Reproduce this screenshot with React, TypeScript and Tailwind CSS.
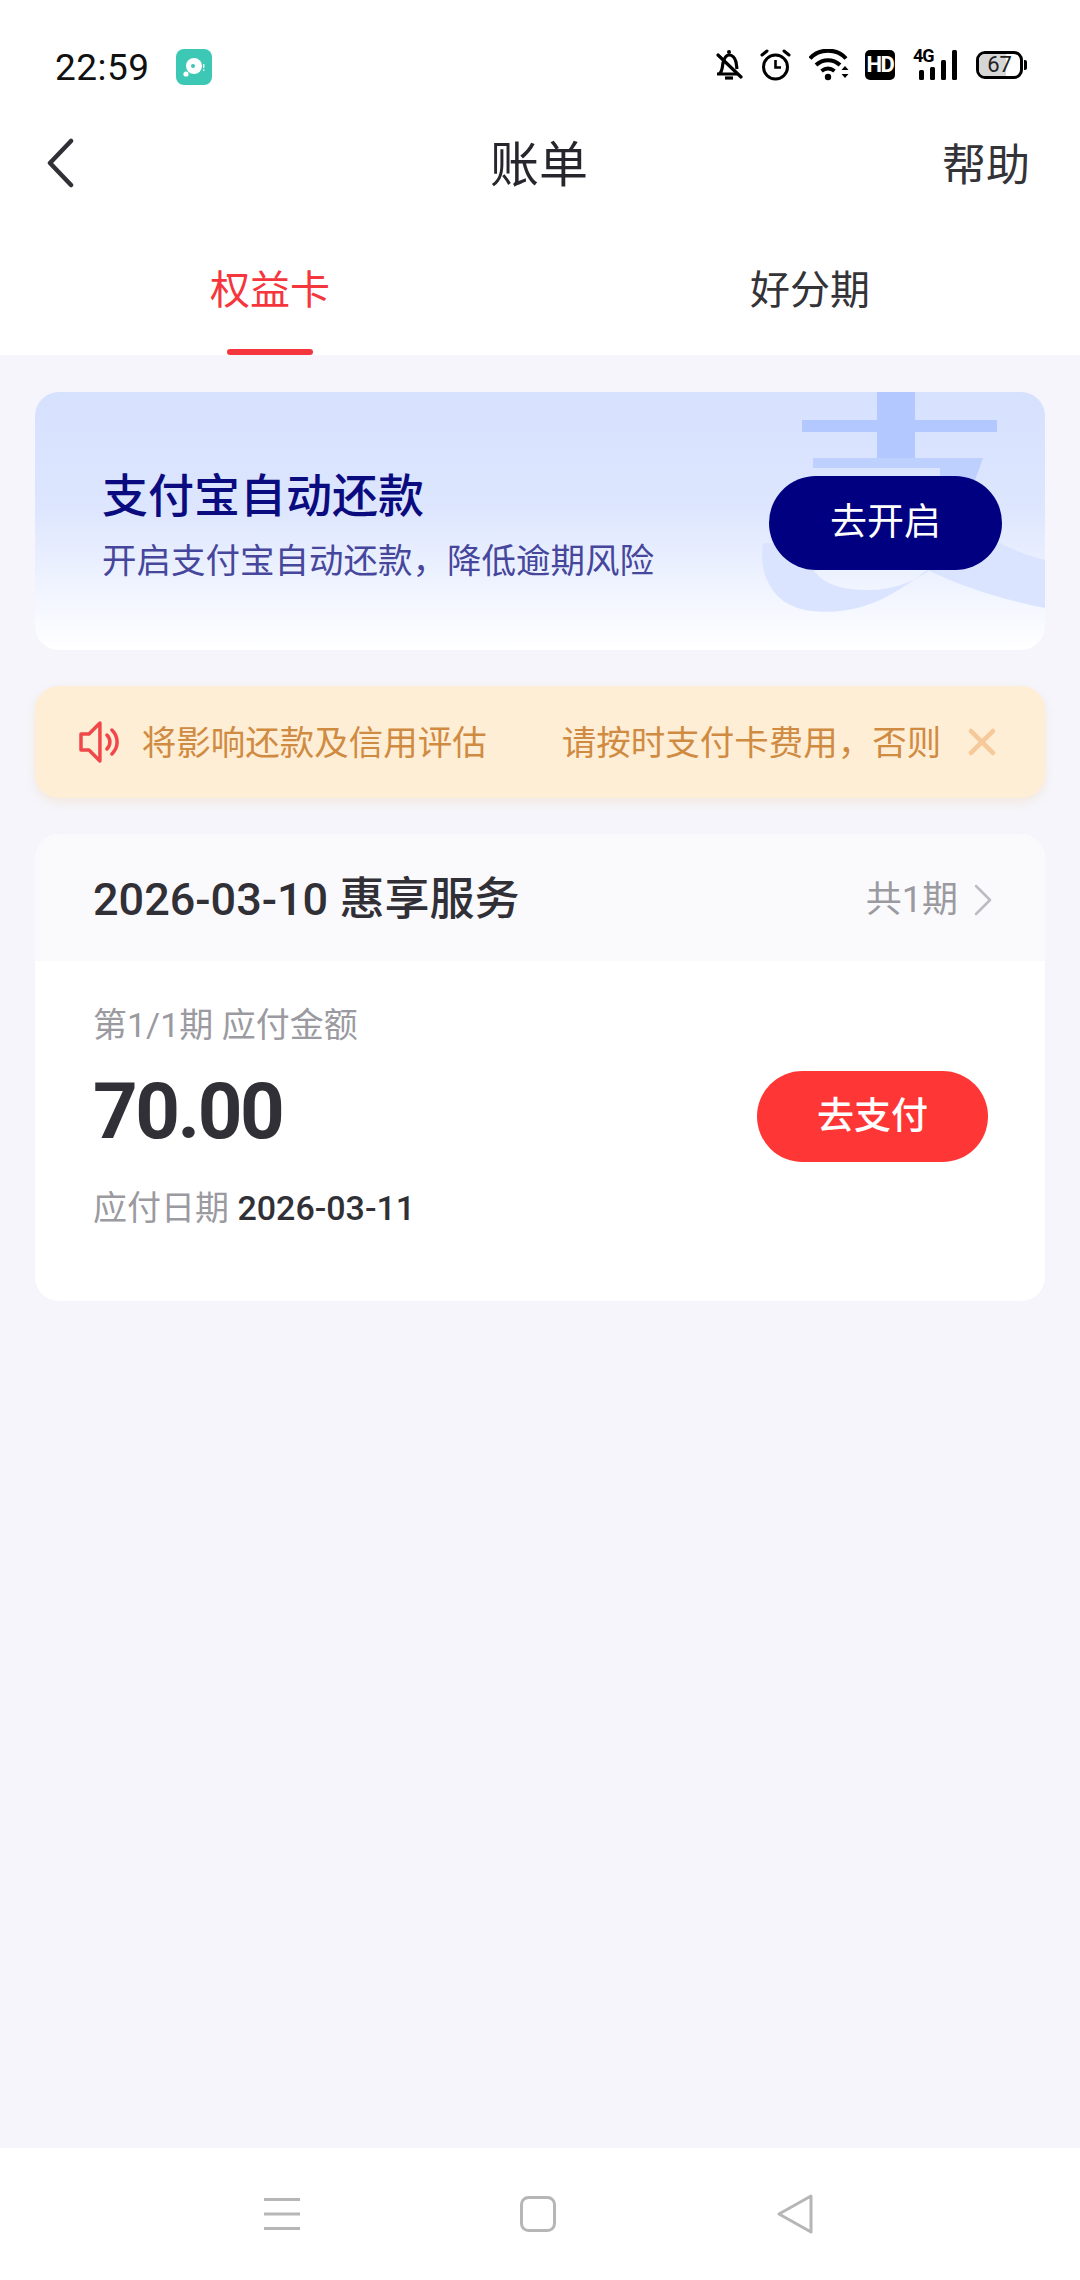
import { X } from "lucide-react";

const cjk = "font-['Roboto','Noto_Sans_CJK_SC',sans-serif]";

function AppBadge() {
  return (
    <svg width="36" height="36" viewBox="0 0 36 36" className="ml-[26px]">
      <rect width="36" height="36" rx="8" fill="#3cc8b4" />
      <circle cx="18" cy="17" r="8" fill="#fff" />
      <circle cx="17" cy="17" r="2" fill="#3cc8b4" />
      <circle cx="10" cy="25" r="2.6" fill="#fff" />
      <rect x="27" y="15" width="1.4" height="4" fill="#fff" />
      <rect x="27" y="20.5" width="1.4" height="1.4" fill="#fff" />
    </svg>
  );
}

function StatusIcons() {
  return (
    <div className="flex items-center text-black">
      {/* muted bell */}
      <svg width="28" height="32" viewBox="0 0 28 32" fill="none" stroke="#000" strokeWidth="3.200">
        <path d="M2 25h20M4 25c4-3 3-7 4-11 1-4 3-8 6-8s6 3 7 7l1 7" />
        <path d="M3 6l23 22" strokeLinecap="round" />
        <path d="M10 29h8" />
        <circle cx="14" cy="3" r="2" fill="#000" stroke="none" />
      </svg>
      {/* alarm */}
      <svg width="31" height="32" viewBox="0 0 31 32" fill="none" stroke="#000" strokeWidth="3" className="ml-[17px]">
        <circle cx="15.5" cy="18" r="12" />
        <path d="M15.5 11v7.500H21" strokeWidth="2.600" />
        <path d="M2 6l5-4M29 6l-5-4" strokeLinecap="round" />
      </svg>
      {/* wifi */}
      <svg width="40" height="32" viewBox="0 0 40 32" fill="none" stroke="#000" strokeWidth="4" className="ml-[18px]">
        <path d="M1 9.500C10-1 28-1 37 9.500" />
        <path d="M7 16c7-6.500 17-6.500 24 0" />
        <path d="M12.500 22c4-3 9-3 13 0" />
        <circle cx="19" cy="28" r="3.200" fill="#000" stroke="none" />
        <path d="M32.500 21l3.500-4 3.500 4zM32.500 25l3.500 4 3.500-4z" fill="#000" stroke="none" />
      </svg>
      <div className="ml-[16px] flex h-[30px] w-[30px] items-center justify-center rounded-[5px] bg-black font-['Roboto',sans-serif] text-[22px] leading-none font-bold tracking-[-1.500px] text-white">
        HD
      </div>
      {/* 4G + signal */}
      <div className="relative ml-[18px] h-[32px] w-[44px]">
        <span className="absolute top-[-3px] left-0 font-['Roboto',sans-serif] text-[18px] leading-[20px] font-bold tracking-[-1px]">4G</span>
        <svg width="44" height="32" viewBox="0 0 44 32" fill="#000" className="absolute top-0 left-0">
          <rect x="6" y="21" width="5" height="10" rx="1.500" />
          <rect x="17" y="18" width="5" height="13" rx="1.500" />
          <rect x="28" y="11" width="5" height="20" rx="1.500" />
          <rect x="39" y="1" width="5" height="30" rx="1.500" />
        </svg>
      </div>
      {/* battery */}
      <div className="relative ml-[19px] flex h-[28px] w-[47px] items-center justify-center overflow-hidden rounded-[9px] border-[3px] border-black">
        <div className="absolute top-0 bottom-0 left-0 w-[67%] bg-[#d6d6d6]" />
        <span className="relative font-['Roboto',sans-serif] text-[22px] leading-none text-[#222]">67</span>
      </div>
      <div className="ml-[1px] h-[10px] w-[3px] rounded-r-[2px] bg-black" />
    </div>
  );
}

function AlipayMark() {
  return (
    <svg width="300" height="258" viewBox="0 0 300 258" className="absolute top-0 right-0">
      <g fill="#b3c8fe">
        <rect x="132" y="0" width="38" height="68" />
        <rect x="57" y="28" width="195" height="12" />
      </g>
      <path fill="#bdd0fe" d="M68 66h170l-8 22h-35v-12H68z" />
      <path
        fill="#dae4ff"
        d="M18 151c-2 12-1 26 4 37 8 18 22 28 44 31 30 3 58-3 84-19 12-7 23-15 32-22 38 18 78 30 118 38v-48c-16-4-32-10-45-17l-10 5-60 22c-20 14-40 20-60 20-26 0-48-4-59-24-5-8-6-14-5-23z"
      />
    </svg>
  );
}

export default function App() {
  return (
    <div className={`flex h-[2280px] w-[1080px] flex-col bg-[#f5f5fb] ${cjk}`}>
      {/* Status bar */}
      <div className="flex h-[100px] items-start justify-between bg-white pt-[49px] pr-[53px] pl-[55px]">
        <div className="flex h-[36px] items-center">
          <span className="text-[37px] leading-none tracking-[0.5px] text-[#111]">22:59</span>
          <AppBadge />
        </div>
        <StatusIcons />
      </div>

      {/* Title */}
      <div className="grid h-[125px] grid-cols-3 items-center bg-white pr-[50px] pl-[46px]">
        <svg width="30" height="50" viewBox="0 0 30 50" fill="none" stroke="#303036" strokeWidth="4.500" strokeLinecap="round" strokeLinejoin="round">
          <path d="M25 3L4 25l21 22" />
        </svg>
        <h1 className="pt-[6px] pl-[2px] text-center text-[49px] leading-none font-normal text-[#26262c]">账单</h1>
        <span className="pt-[6px] text-right text-[44px] leading-none text-[#333338]">帮助</span>
      </div>

      {/* Tabs */}
      <div className="grid h-[130px] grid-cols-2 bg-white">
        <div className="flex flex-col items-center pt-[44px]">
          <span className="text-[40px] leading-[44px] text-[#f5363c]">权益卡</span>
          <div className="mt-[36px] h-[6px] w-[86px] rounded-full bg-[#f5363c]" />
        </div>
        <div className="flex flex-col items-center pt-[44px]">
          <span className="text-[40px] leading-[44px] text-[#333338]">好分期</span>
        </div>
      </div>

      <main className="flex flex-1 flex-col gap-[36px] px-[35px] pt-[37px]">
        {/* Alipay banner */}
        <section className="relative flex h-[258px] items-center justify-between overflow-hidden rounded-[24px] bg-gradient-to-b from-[#d6e1fe] via-[#dde6fe] via-45% to-white pr-[43px] pl-[67px]">
          <AlipayMark />
          <div className="relative mt-[6px]">
            <h2 className="text-[46px] leading-[60px] font-medium text-[#0b0b80]">支付宝自动还款</h2>
            <p className="mt-[13px] text-[34.500px] leading-[44px] text-[#46469c]">开启支付宝自动还款，降低逾期风险</p>
          </div>
          <button className="relative mt-[4px] h-[94px] w-[233px] rounded-full bg-[#000080] text-[37px] text-white">去开启</button>
        </section>

        {/* Notice */}
        <section className="flex h-[112px] items-center rounded-[24px] bg-[#ffeed6] pr-[41px] pl-[44px] shadow-[0_4px_10px_rgba(240,210,170,0.35)]">
          <svg width="40" height="46" viewBox="0 0 40 46" fill="none" stroke="#f0484a" strokeWidth="3.500" strokeLinejoin="round" strokeLinecap="round">
            <path d="M2 15h8L21 4v38L10 31H2z" />
            <path d="M28 16c4 4 4 10 0 14" />
            <path d="M33 11c7 7 7 17 0 24" />
          </svg>
          <div className="ml-[23px] w-[800px] overflow-hidden pt-[2px] text-[34.500px] leading-[44px] whitespace-nowrap text-[#d08b42]">
            <span>将影响还款及信用评估</span>
            <span className="ml-[75px]">请按时支付卡费用，否则将影响还款及信用评估</span>
          </div>
          <X size={44} strokeWidth={2.500} className="ml-[21px] text-[#f5c999]" />
        </section>

        {/* Bill card */}
        <section className="overflow-hidden rounded-[24px] bg-white">
          <div className="flex h-[127px] items-center justify-between bg-[#fafafd] pt-[4px] pr-[52px] pl-[58px]">
            <h3 className="text-[45px] leading-none font-medium text-[#303036]">2026-03-10 惠享服务</h3>
            <div className="flex items-center">
              <span className="text-[36px] leading-none text-[#9a9aa0]">共1期</span>
              <svg width="20" height="32" viewBox="0 0 20 32" fill="none" stroke="#bcbcc2" strokeWidth="2.500" strokeLinecap="round" strokeLinejoin="round" className="ml-[15px]">
                <path d="M3 2l14 14L3 30" />
              </svg>
            </div>
          </div>
          <div className="flex h-[340px] items-start justify-between pt-[42px] pr-[57px] pl-[58px]">
            <div>
              <p className="text-[34px] leading-[44px] text-[#9a9aa0]">第1/1期 应付金额</p>
              <p className="mt-[20px] text-[78px] leading-[90px] font-bold tracking-[-2.500px] text-[#303036]">70.00</p>
              <p className="mt-[29px] text-[34px] leading-[44px] text-[#9a9aa0]">
                应付日期 <span className="font-medium text-[#303036]">2026-03-11</span>
              </p>
            </div>
            <button className="mt-[68px] h-[91px] w-[231px] rounded-full bg-[#ff3636] text-[37px] font-medium text-white">去支付</button>
          </div>
        </section>
      </main>

      {/* Nav bar */}
      <nav className="flex h-[132px] items-center justify-between bg-white pr-[266px] pl-[264px]">
        <svg width="36" height="32" viewBox="0 0 36 32" fill="#b6b6b6">
          <rect y="0" width="36" height="3" />
          <rect y="14.500" width="36" height="3" />
          <rect y="29" width="36" height="3" />
        </svg>
        <svg width="36" height="36" viewBox="0 0 36 36" fill="none" stroke="#b6b6b6" strokeWidth="3">
          <rect x="1.500" y="1.500" width="33" height="33" rx="7" />
        </svg>
        <svg width="38" height="40" viewBox="0 0 38 40" fill="none" stroke="#b6b6b6" strokeWidth="3" strokeLinejoin="round">
          <path d="M35 2L3 20l32 18z" />
        </svg>
      </nav>
    </div>
  );
}
